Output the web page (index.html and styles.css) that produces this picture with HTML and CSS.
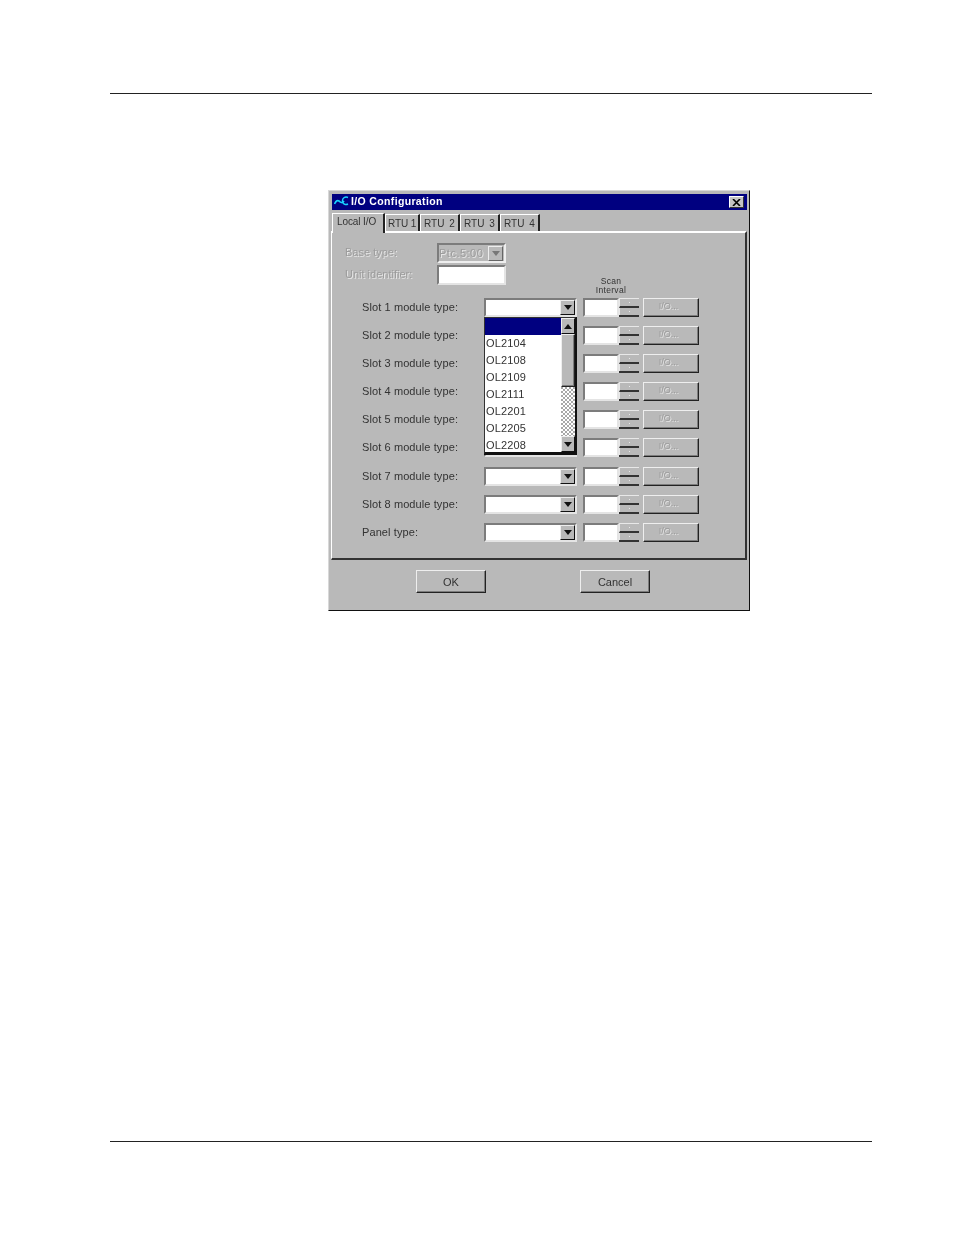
FILE: index.html
```html
<!DOCTYPE html>
<html lang="en">
<head>
    <meta charset="UTF-8">
    <title>I/O Configuration</title>
    <link rel="stylesheet" href="styles.css">
</head>
<body>
    <hr class="page-rule">

    <div class="dialog">
        <div class="titlebar">
            <svg class="logo" width="15" height="10" viewBox="0 0 15 10">
                <path d="M0.5 8 C2 5 3 4 5 5 C6.5 6 8 8 10 5" fill="none" stroke="#19d3ff" stroke-width="1.6"/>
                <path d="M14 1.5 C11 0 8 2.5 8.5 5.5 C9 8.5 12 9 14 8" fill="none" stroke="#19d3ff" stroke-width="1.4"/>
            </svg>
            <span class="title-text">I/O Configuration</span>
            <span class="close">
                <svg width="9" height="7" viewBox="0 0 9 7"><path d="M1 0 L8 7 M8 0 L1 7" stroke="#000" stroke-width="1.6"/></svg>
            </span>
        </div>

        <div class="tabs">
            <div class="tab tab-active">Local I/O</div>
            <div class="tab tab-1">RTU 1</div>
            <div class="tab tab-2">RTU 2</div>
            <div class="tab tab-2">RTU 3</div>
            <div class="tab tab-2">RTU 4</div>
        </div>

        <div class="panel">
            <div class="top-row">
                <span class="top-label disabled">Base type:</span>
                <div class="base-select">
                    <span class="base-value disabled">Ptc.5:00</span>
                    <span class="arrow-btn arrow-off"><i class="tri tri-off"></i></span>
                </div>
            </div>
            <div class="top-row unit-row">
                <span class="top-label disabled">Unit identifier:</span>
                <div class="unit-input sunken"></div>
                <div class="scan-label">Scan<br>Interval</div>
            </div>

            <div class="slot-row">
                <span class="slot-label">Slot 1 module type:</span>
                <div class="combo sunken"><span class="arrow-btn"><i class="tri"></i></span></div>
                <div class="scan-input sunken"></div>
                <div class="spin"><span>.</span><span>.</span></div>
                <div class="io-btn raised disabled">I/O...</div>
            </div>
            <div class="slot-row">
                <span class="slot-label">Slot 2 module type:</span>
                <div class="combo sunken"></div>
                <div class="scan-input sunken"></div>
                <div class="spin"><span>.</span><span>.</span></div>
                <div class="io-btn raised disabled">I/O...</div>
            </div>
            <div class="slot-row">
                <span class="slot-label">Slot 3 module type:</span>
                <div class="combo sunken"></div>
                <div class="scan-input sunken"></div>
                <div class="spin"><span>.</span><span>.</span></div>
                <div class="io-btn raised disabled">I/O...</div>
            </div>
            <div class="slot-row">
                <span class="slot-label">Slot 4 module type:</span>
                <div class="combo sunken"></div>
                <div class="scan-input sunken"></div>
                <div class="spin"><span>.</span><span>.</span></div>
                <div class="io-btn raised disabled">I/O...</div>
            </div>
            <div class="slot-row">
                <span class="slot-label">Slot 5 module type:</span>
                <div class="combo sunken"></div>
                <div class="scan-input sunken"></div>
                <div class="spin"><span>.</span><span>.</span></div>
                <div class="io-btn raised disabled">I/O...</div>
            </div>
            <div class="slot-row">
                <span class="slot-label">Slot 6 module type:</span>
                <div class="combo sunken"></div>
                <div class="scan-input sunken"></div>
                <div class="spin"><span>.</span><span>.</span></div>
                <div class="io-btn raised disabled">I/O...</div>
            </div>
            <div class="slot-row">
                <span class="slot-label">Slot 7 module type:</span>
                <div class="combo sunken"><span class="arrow-btn"><i class="tri"></i></span></div>
                <div class="scan-input sunken"></div>
                <div class="spin"><span>.</span><span>.</span></div>
                <div class="io-btn raised disabled">I/O...</div>
            </div>
            <div class="slot-row">
                <span class="slot-label">Slot 8 module type:</span>
                <div class="combo sunken"><span class="arrow-btn"><i class="tri"></i></span></div>
                <div class="scan-input sunken"></div>
                <div class="spin"><span>.</span><span>.</span></div>
                <div class="io-btn raised disabled">I/O...</div>
            </div>
            <div class="slot-row">
                <span class="slot-label">Panel type:</span>
                <div class="combo sunken"><span class="arrow-btn"><i class="tri"></i></span></div>
                <div class="scan-input sunken"></div>
                <div class="spin"><span>.</span><span>.</span></div>
                <div class="io-btn raised disabled">I/O...</div>
            </div>

            <div class="dropdown">
                <div class="list">
                    <div class="list-item list-selected"></div>
                    <div class="list-item">OL2104</div>
                    <div class="list-item">OL2108</div>
                    <div class="list-item">OL2109</div>
                    <div class="list-item">OL2111</div>
                    <div class="list-item">OL2201</div>
                    <div class="list-item">OL2205</div>
                    <div class="list-item">OL2208</div>
                </div>
                <div class="scrollbar">
                    <span class="arrow-btn sb-btn"><i class="tri tri-up"></i></span>
                    <div class="thumb raised"></div>
                    <div class="track"></div>
                    <span class="arrow-btn sb-btn"><i class="tri"></i></span>
                </div>
            </div>
        </div>

        <div class="actions">
            <div class="action-btn raised">OK</div>
            <div class="action-btn raised">Cancel</div>
        </div>
    </div>

    <hr class="page-rule footer-rule">
</body>
</html>
```

FILE: styles.css
```css
* {
    box-sizing: border-box;
}

body {
    margin: 0;
    background: #fff;
    font-family: "Liberation Sans", Arial, sans-serif;
    font-size: 11px;
    color: #333;
}

.page-rule {
    margin: 93px 82px 0 110px;
    height: 1px;
    border: none;
    background: #222;
}

.footer-rule {
    margin-top: 530px;
}

.dialog {
    width: 422px;
    height: 421px;
    margin: 96px 0 0 328px;
    padding: 3px 2px 0 3px;
    background: #b9b9b9;
    border: 1px solid;
    border-color: #d8d8d8 #111 #111 #d8d8d8;
    filter: blur(0.5px);
}

.titlebar {
    height: 16px;
    background: #000080;
    display: flex;
    align-items: center;
    padding: 0 3px 2px 2px;
    color: #fff;
    font-weight: bold;
    font-size: 10.5px;
    letter-spacing: 0.35px;
}

.logo {
    margin-right: 2px;
}

.title-text {
    flex: 1;
}

.close {
    width: 15px;
    height: 12px;
    margin-bottom: -2px;
    background: #c4c4c4;
    border: 1px solid;
    border-color: #fff #333 #333 #fff;
    display: flex;
    align-items: center;
    justify-content: center;
}

.tabs {
    display: flex;
    height: 22px;
    padding-top: 3px;
}

.tab {
    height: 19px;
    margin-top: 1px;
    border-top: 1px solid #fff;
    border-left: 1px solid #fff;
    border-right: 2px solid #222;
    padding: 3px 0 0 3px;
    font-size: 10px;
    white-space: nowrap;
}

.tab-active {
    width: 53px;
    margin-top: 0;
    height: 20px;
    padding-top: 2px;
    padding-left: 4px;
    letter-spacing: -0.1px;
    position: relative;
    z-index: 1;
    background: #b9b9b9;
}

.tab-1 {
    width: 35px;
    padding-left: 2px;
    letter-spacing: -0.1px;
}

.tab-2 {
    width: 40px;
    word-spacing: 2px;
}

.panel {
    position: relative;
    height: 329px;
    margin: -1px 0 0 -1px;
    padding-top: 10px;
    border: 1px solid;
    border-color: #fff #333 #333 #fff;
    border-width: 2px 2px 2px 1px;
}

.top-row {
    display: flex;
    height: 22px;
    padding-left: 12px;
    align-items: flex-start;
}

.unit-row {
    height: 33px;
}

.top-label {
    width: 93px;
    line-height: 18px;
}

.disabled {
    color: #9c9c9c;
    text-shadow: 1px 1px 0 #e6e6e6;
}

.base-select {
    width: 69px;
    height: 20px;
    display: flex;
    align-items: center;
    justify-content: space-between;
    padding: 0 1px 0 0;
    border: 2px solid;
    border-color: #7c7c7c #eee #eee #7c7c7c;
}

.base-value {
    letter-spacing: 0.5px;
}

.sunken {
    background: #fff;
    border: 2px solid;
    border-color: #7c7c7c #e4e4e4 #e4e4e4 #7c7c7c;
}

.unit-input {
    width: 69px;
    height: 20px;
}

.scan-label {
    width: 56px;
    margin-left: 77px;
    align-self: flex-end;
    padding-bottom: 3px;
    text-align: center;
    font-size: 8.5px;
    line-height: 9px;
    letter-spacing: 0.3px;
}

.slot-row {
    display: flex;
    height: 28.1px;
    padding-left: 29px;
}

.slot-label {
    width: 123px;
    line-height: 18px;
    letter-spacing: 0.1px;
}

.slot-label,
.top-label {
    padding-left: 1px;
}

.combo {
    width: 93px;
    height: 19px;
    display: flex;
    justify-content: flex-end;
    padding: 0;
}

.arrow-btn {
    width: 15px;
    height: 15px;
    background: #b9b9b9;
    border: 1px solid;
    border-color: #eee #111 #111 #eee;
    display: flex;
    align-items: center;
    justify-content: center;
}

.arrow-off {
    border-color: #eee #666 #666 #eee;
}

.tri {
    width: 0;
    height: 0;
    border-left: 4px solid transparent;
    border-right: 4px solid transparent;
    border-top: 5px solid #111;
}

.tri-off {
    border-top-color: #777;
}

.tri-up {
    border-top: none;
    border-bottom: 5px solid #111;
}

.scan-input {
    width: 36px;
    height: 19px;
    margin-left: 6px;
}

.spin {
    width: 20px;
    height: 19px;
    display: flex;
    flex-direction: column;
    border-bottom: 2px solid #333;
}

.spin span {
    flex: 1;
    border-left: 1px solid #e8e8e8;
    color: #eee;
    text-align: center;
    font-size: 9px;
    line-height: 3px;
}

.spin span:first-child {
    border-top: 1px solid #e8e8e8;
    border-bottom: 2px solid #333;
}

.raised {
    background: #b9b9b9;
    border: 1px solid;
    border-color: #eee #222 #222 #eee;
    box-shadow: inset -1px -1px 0 #7c7c7c;
}

.io-btn {
    width: 56px;
    height: 19px;
    margin-left: 4px;
    padding-right: 5px;
    text-align: center;
    line-height: 15px;
    font-size: 9px;
}

.dropdown {
    position: absolute;
    left: 152px;
    top: 84px;
    width: 93px;
    height: 138px;
    display: flex;
    background: #fff;
    border: 1px solid;
    border-color: #333 #111 #111 #333;
    border-width: 1px 2px 3px 1px;
}

.list {
    width: 76px;
}

.list-item {
    height: 17px;
    padding-left: 1px;
    line-height: 17px;
    font-size: 11px;
    letter-spacing: 0.15px;
}

.list-selected {
    background: #000080;
}

.scrollbar {
    width: 14px;
    display: flex;
    flex-direction: column;
}

.sb-btn {
    width: 14px;
    height: 16px;
}

.thumb {
    height: 53px;
}

.track {
    flex: 1;
    background: repeating-conic-gradient(#fff 0 25%, #a8a8a8 0 50%) 0 0 / 4px 4px;
}

.actions {
    display: flex;
    padding: 10px 0 0 84px;
    gap: 94px;
}

.action-btn {
    width: 70px;
    height: 23px;
    text-align: center;
    line-height: 22px;
    font-size: 11px;
}
```
